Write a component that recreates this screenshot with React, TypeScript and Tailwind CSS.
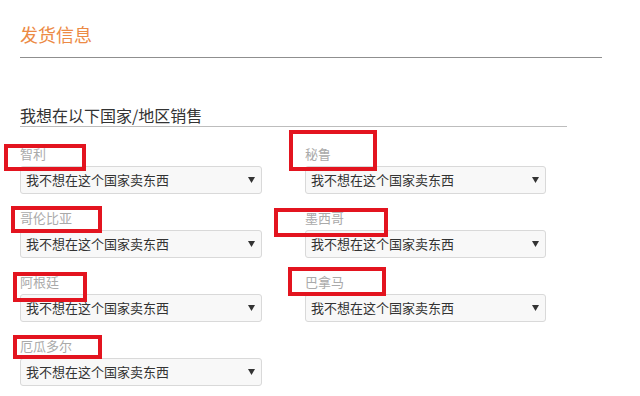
import React from "react";

const countries = [
    { name: "智利", col: 0 },
    { name: "秘鲁", col: 1 },
    { name: "哥伦比亚", col: 0 },
    { name: "墨西哥", col: 1 },
    { name: "阿根廷", col: 0 },
    { name: "巴拿马", col: 1 },
    { name: "厄瓜多尔", col: 0 },
];

// red annotation boxes drawn over the labels
const marks = [
    { left: 4, top: 144, width: 82, height: 27 },
    { left: 289, top: 130, width: 88, height: 41 },
    { left: 11, top: 206, width: 91, height: 27 },
    { left: 274, top: 208, width: 114, height: 29 },
    { left: 13, top: 272, width: 74, height: 30 },
    { left: 288, top: 267, width: 98, height: 29 },
    { left: 13, top: 335, width: 89, height: 24 },
];

function FakeSelect() {
    return (
        <div className="h-[28px] flex items-center justify-between pl-[5px] pr-[6px] rounded-[3px] border border-[#d9d9d9] bg-[#f8f8f8] text-[13px] text-[#333]">
            <span>我不想在这个国家卖东西</span>
            <svg width="7" height="6" viewBox="0 0 7 6">
                <path d="M0 0 L7 0 L3.5 6 Z" fill="#333" />
            </svg>
        </div>
    );
}

export default function App() {
    return (
        <div
            className="relative w-[640px] h-[396px] bg-white overflow-hidden pl-[20px]"
            style={{ fontFamily: '"Noto Sans CJK SC", "Liberation Sans", sans-serif' }}
        >
            <h1 className="w-[582px] pt-[22px] pb-[11px] text-[18px] leading-[24px] text-[#ec8a45] border-b border-[#8f8f8f]">
                发货信息
            </h1>
            <h2 className="w-[547px] mt-[46px] text-[16px] leading-[22px] text-[#333] border-b border-[#bdbdbd]">
                我想在以下国家/地区销售
            </h2>
            <div className="mt-[19px] grid grid-cols-[242px_241px] gap-x-[43px] gap-y-[16px]">
                {countries.map((c) => (
                    <div key={c.name} className="flex flex-col">
                        <div className="h-[16px] leading-[16px] mb-[4px] text-[13px] text-[#aaa]">{c.name}</div>
                        <FakeSelect />
                    </div>
                ))}
            </div>
            {marks.map((m, i) => (
                <div
                    key={i}
                    className="absolute border-[4px] border-[#e3141f]"
                    style={{ left: m.left, top: m.top, width: m.width, height: m.height }}
                />
            ))}
        </div>
    );
}
